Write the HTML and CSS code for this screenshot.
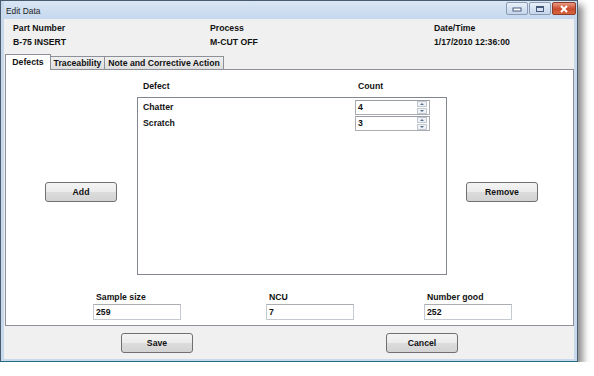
FILE: index.html
```html
<!DOCTYPE html>
<html>
<head>
<meta charset="utf-8">
<link rel="stylesheet" href="styles.css">
</head>
<body>
<div class="window">
  <div class="titlebar">
    <span class="title">Edit Data</span>
    <div class="caption-btns">
      <span class="cbtn min"><svg width="10" height="6" viewBox="0 0 10 6"><rect x="1" y="2" width="8" height="3" fill="#fff" stroke="#45597a" stroke-width="1"/></svg></span>
      <span class="cbtn max"><svg width="10" height="8" viewBox="0 0 10 8"><rect x="1.5" y="1.5" width="7" height="5" fill="none" stroke="#45597a" stroke-width="1"/><rect x="1.5" y="1.5" width="7" height="1.5" fill="#45597a"/></svg></span>
      <span class="cbtn close"><svg width="10" height="8" viewBox="0 0 10 8"><path d="M2 1 L8 7 M8 1 L2 7" stroke="#fff" stroke-width="2"/></svg></span>
    </div>
  </div>
  <div class="client">
    <div class="header">
      <div class="hcol c1"><div>Part Number</div><div>B-75 INSERT</div></div>
      <div class="hcol c2"><div>Process</div><div>M-CUT OFF</div></div>
      <div class="hcol c3"><div>Date/Time</div><div>1/17/2010 12:36:00</div></div>
    </div>
    <div class="tabs">
      <div class="tab sel t1">Defects</div>
      <div class="tab t2">Traceability</div>
      <div class="tab t3">Note and Corrective Action</div>
    </div>
    <div class="panel">
      <div class="mid">
        <div class="side-left"><button class="btn">Add</button></div>
        <div class="gridcol">
          <div class="ghead"><span class="gh-name">Defect</span><span>Count</span></div>
          <div class="list">
            <div class="row"><span class="rname">Chatter</span><span class="spin"><span class="sval">4</span><span class="sbtns"><span class="sb up"></span><span class="sb dn"></span></span></span></div>
            <div class="row"><span class="rname">Scratch</span><span class="spin"><span class="sval">3</span><span class="sbtns"><span class="sb up"></span><span class="sb dn"></span></span></span></div>
          </div>
        </div>
        <div class="side-right"><button class="btn">Remove</button></div>
      </div>
      <div class="fields">
        <div class="field"><div class="flabel">Sample size</div><div class="finput">259</div></div>
        <div class="field"><div class="flabel">NCU</div><div class="finput">7</div></div>
        <div class="field"><div class="flabel">Number good</div><div class="finput">252</div></div>
      </div>
    </div>
    <div class="footer">
      <button class="btn save">Save</button>
      <button class="btn cancel">Cancel</button>
    </div>
  </div>
</div>
</body>
</html>
```
FILE: styles.css
```css
* { box-sizing: border-box; }
body {
  margin: 0;
  background: #fff;
  font-family: "Liberation Sans", Arial, sans-serif;
  font-size: 8.7px;
  color: #111;
}
.window {
  width: 578px;
  height: 362px;
  border: 1px solid #4a5d70;
  border-bottom-color: #1f6c7c;
  padding: 0 3px 2px 3px;
  background: #c8d9ec;
  display: flex;
  flex-direction: column;
  box-shadow: 5px 5px 7px rgba(0,0,0,0.45);
}
.titlebar {
  height: 18px;
  display: flex;
  align-items: center;
  justify-content: space-between;
  background: linear-gradient(#d9e6f4, #c5d8ee);
}
.title {
  font-size: 8.4px;
  color: #1b1b1b;
  padding-left: 2px;
  margin-top: 1px;
}
.caption-btns {
  display: flex;
  gap: 1px;
  margin-right: -2px;
  align-self: flex-start;
  margin-top: 1px;
}
.cbtn {
  width: 22px;
  height: 13px;
  display: flex;
  align-items: center;
  justify-content: center;
  border: 1px solid #8a9bb3;
  border-radius: 2px;
  background: linear-gradient(#e8f0f9, #c5d5ea);
}
.cbtn.close {
  width: 24px;
  border-color: #8c3a2a;
  background: linear-gradient(#e99a83, #c94a2d 55%, #d7683f);
}
.client {
  flex: 1;
  background: #f0f0f0;
  display: flex;
  flex-direction: column;
  padding-left: 1px;
}
.header {
  display: flex;
  padding-top: 2px;
  padding-left: 8px;
  font-weight: bold;
  line-height: 14px;
}
.hcol.c1 { width: 197px; }
.hcol.c2 { width: 224px; }
.tabs {
  display: flex;
  margin-top: 5px;
  height: 15px;
  font-weight: bold;
  position: relative;
  z-index: 1;
}
.tab {
  margin-top: 2px;
  height: 13px;
  line-height: 12px;
  text-align: center;
  border: 1px solid #8d9099;
  border-bottom: none;
  background: linear-gradient(#f0f0f0, #dedede);
  margin-left: -1px;
}
.tab.sel {
  margin-top: 0;
  height: 16px;
  background: #fff;
  margin-left: 0;
  line-height: 15px;
}
.t1 { width: 46px; }
.t2 { width: 55px; }
.t3 { width: 120px; }
.panel {
  height: 257px;
  background: #fff;
  border: 1px solid #8d9099;
  display: flex;
  flex-direction: column;
  padding-top: 10px;
}
.mid {
  display: flex;
  align-items: flex-start;
}
.side-left {
  width: 131px;
  padding-left: 39px;
  padding-top: 102px;
}
.side-right {
  padding-left: 19px;
  padding-top: 102px;
}
.btn {
  width: 72px;
  height: 20px;
  border: 1px solid #707070;
  border-radius: 3px;
  background: linear-gradient(#f4f4f4 0%, #ebebeb 50%, #dcdcdc 51%, #d3d3d3 100%);
  font-family: "Liberation Sans", Arial, sans-serif;
  font-size: 8.7px;
  font-weight: bold;
  color: #111;
  padding: 0;
}
.gridcol { width: 310px; }
.ghead {
  height: 12px;
  line-height: 12px;
  font-weight: bold;
  padding-left: 6px;
  margin-bottom: 5px;
  display: flex;
}
.gh-name { width: 215px; }
.list {
  height: 178px;
  border: 1px solid #828790;
  padding-top: 1px;
  font-weight: bold;
}
.row {
  height: 16px;
  display: flex;
  align-items: center;
  padding-left: 5px;
}
.rname { width: 212px; }
.spin {
  width: 75px;
  height: 15px;
  border: 1px solid #abadb3;
  border-top-color: #9a9da6;
  display: flex;
  align-items: center;
  justify-content: space-between;
  padding-left: 2px;
}
.sbtns {
  width: 10px;
  height: 13px;
  display: flex;
  flex-direction: column;
  gap: 1px;
  margin-right: 2px;
}
.sb {
  flex: 1;
  border: 1px solid #c3c8d0;
  background: #eef1f5;
  position: relative;
}
.sb::after {
  content: "";
  position: absolute;
  left: 2px;
  border-left: 2px solid transparent;
  border-right: 2px solid transparent;
}
.sb.up::after { top: 1px; border-bottom: 2px solid #56708f; }
.sb.dn::after { top: 1px; border-top: 2px solid #56708f; }
.fields {
  display: grid;
  grid-template-columns: 173px 158px 88px;
  padding-left: 87px;
  margin-top: 16px;
  font-weight: bold;
}
.flabel {
  line-height: 12px;
  padding-left: 3px;
}
.finput {
  width: 88px;
  height: 16px;
  margin-top: 1px;
  border: 1px solid #c5c9d0;
  border-top-color: #abadb3;
  line-height: 14px;
  padding-left: 2px;
}
.footer {
  display: flex;
  margin-top: 7px;
  padding-left: 116px;
}
.btn.cancel { margin-left: 193px; }
```
